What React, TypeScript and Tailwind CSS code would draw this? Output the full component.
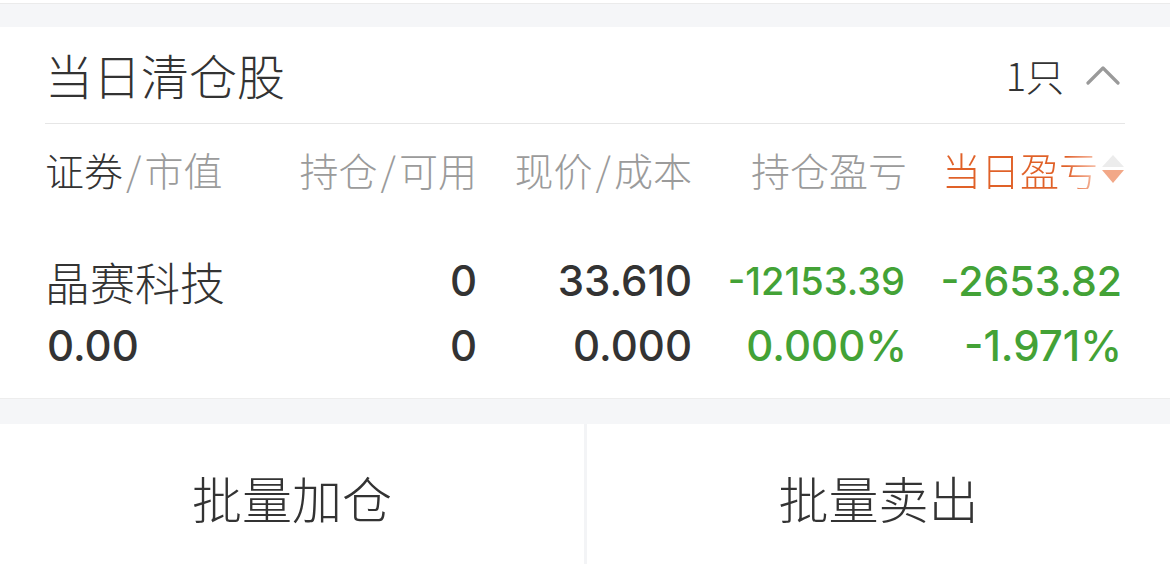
const cjk = "font-['Noto_Sans_CJK_SC',sans-serif]";
const num = "font-['Inter','Noto_Sans_CJK_SC',sans-serif]";

function ChevronUp() {
  return (
    <svg viewBox="0 0 34 20" className="h-[20px] w-[34px]" aria-hidden>
      <path d="M2 18 L17 3 L32 18" fill="none" stroke="#9a9a9a" strokeWidth="3.2" strokeLinecap="round" strokeLinejoin="round" />
    </svg>
  )
}

function SortIcon() {
  return (
    <svg viewBox="0 0 26 32" className="h-[32px] w-[26px]" aria-hidden>
      <polygon points="13,2 24,14 2,14" fill="#ececec" />
      <polygon points="2,17 24,17 13,30" fill="#f2a888" />
    </svg>
  )
}

export default function App() {
  return (
    <div className={`h-[564px] w-[1170px] overflow-hidden bg-white ${cjk} font-light text-[#333]`}>
      {/* top gap */}
      <div className="pt-[3px]">
        <div className="h-[24px] border-t border-[#ebebeb] bg-[#f5f6f8]" />
      </div>

      {/* card */}
      <section className="border-b border-[#ededed]">
        <div className="flex h-[96px] items-center justify-between pl-[45px] pr-[50px]">
          <h2 className="-mt-[3px] text-[48px] leading-none">当日清仓股</h2>
          <div className="flex items-center gap-[22px]">
            <span className="text-[38px] leading-none">1只</span>
            <ChevronUp />
          </div>
        </div>
        <div className="mx-[45px] h-px bg-[#e6e6e6]" />

        <div className="grid h-[96px] grid-cols-[215px_215px_215px_215px_215px] items-center pb-[6px] pl-[47px] text-[39px] leading-none text-[#9b9b9b]">
          <div className="-ml-[2px]">
            <span className="text-[#333]">证券</span>
            <span className="mx-[3px]">/</span>市值
          </div>
          <div className="text-right">持仓<span className="mx-[3px]">/</span>可用</div>
          <div className="text-right">现价<span className="mx-[3px]">/</span>成本</div>
          <div className="text-right">持仓盈亏</div>
          <div className="-mr-[4px] flex items-center justify-end">
            <span className="mr-[2px] bg-gradient-to-r from-[#e06128] from-80% to-[#f6c3ad] bg-clip-text text-transparent">当日盈亏</span>
            <SortIcon />
          </div>
        </div>

        <div className={`grid grid-cols-[215px_215px_215px_215px_215px] pt-[28px] pb-[20px] pl-[47px] ${num} font-medium leading-none`}>
          <div className={`-ml-[2px] flex h-[66px] items-center ${cjk} text-[45px] font-light`}>晶赛科技</div>
          <div className="flex h-[66px] items-center justify-end text-[42px]">0</div>
          <div className="flex h-[66px] items-center justify-end text-[42px]">33.610</div>
          <div className="mr-[2px] flex h-[66px] items-center justify-end text-[38px] text-[#43a236]">-12153.39</div>
          <div className="flex h-[66px] items-center justify-end text-[41px] text-[#43a236]">-2653.82</div>

          <div className="flex h-[64px] items-center text-[42px]">0.00</div>
          <div className="flex h-[64px] items-center justify-end text-[42px]">0</div>
          <div className="flex h-[64px] items-center justify-end text-[42px]">0.000</div>
          <div className="flex h-[64px] items-center justify-end text-[42px] text-[#43a236]">0.000%</div>
          <div className="flex h-[64px] items-center justify-end text-[42px] text-[#43a236]">-1.971%</div>
        </div>
      </section>

      <div className="h-[25px] bg-[#f5f6f8]" />

      {/* actions */}
      <div className="grid h-[146px] grid-cols-[584px_1fr]">
        <button className="flex items-center justify-center text-[50px] leading-none text-[#333]">批量加仓</button>
        <button className="flex items-center justify-center border-l-[3px] border-[#f3f4f6] text-[50px] leading-none text-[#333]">批量卖出</button>
      </div>
    </div>
  )
}
